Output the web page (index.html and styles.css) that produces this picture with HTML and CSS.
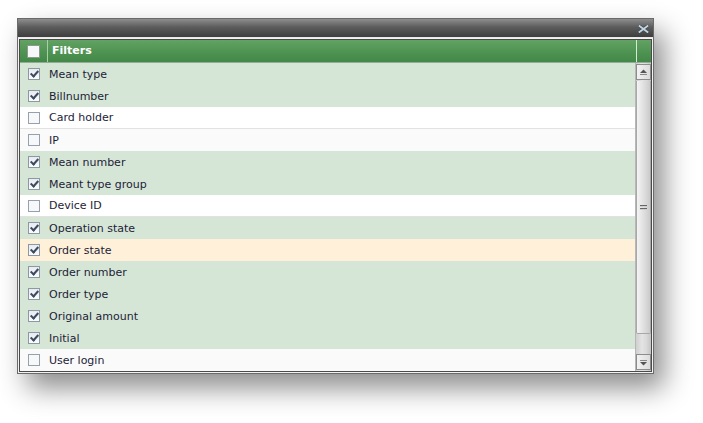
FILE: index.html
```html
<!DOCTYPE html>
<html>
<head>
<meta charset="utf-8">
<link rel="stylesheet" href="styles.css">
</head>
<body>
<div class="window">
  <div class="titlebar">
    <svg class="close" width="11" height="8" viewBox="0 0 11 8">
      <path d="M1.5 1 L9.5 7 M9.5 1 L1.5 7" stroke="#3a4a55" stroke-width="3.2" stroke-linecap="square"/>
      <path d="M1.5 1 L9.5 7 M9.5 1 L1.5 7" stroke="#c4d3dd" stroke-width="1.8" stroke-linecap="square"/>
    </svg>
  </div>
  <div class="panel">
    <div class="header">
      <div class="hcell-check"><span class="box hbox"></span></div>
      <div class="hcell-title">Filters</div>
      <div class="hcell-end"></div>
    </div>
    <div class="body">
      <div class="rows">
        <div class="row on"><span class="cb"><span class="box checked"></span></span><span class="label">Mean type</span></div>
        <div class="row on"><span class="cb"><span class="box checked"></span></span><span class="label">Billnumber</span></div>
        <div class="row off white"><span class="cb"><span class="box"></span></span><span class="label">Card holder</span></div>
        <div class="row off alt"><span class="cb"><span class="box"></span></span><span class="label">IP</span></div>
        <div class="row on"><span class="cb"><span class="box checked"></span></span><span class="label">Mean number</span></div>
        <div class="row on"><span class="cb"><span class="box checked"></span></span><span class="label">Meant type group</span></div>
        <div class="row off white"><span class="cb"><span class="box"></span></span><span class="label">Device ID</span></div>
        <div class="row on"><span class="cb"><span class="box checked"></span></span><span class="label">Operation state</span></div>
        <div class="row hover"><span class="cb"><span class="box checked"></span></span><span class="label">Order state</span></div>
        <div class="row on"><span class="cb"><span class="box checked"></span></span><span class="label">Order number</span></div>
        <div class="row on"><span class="cb"><span class="box checked"></span></span><span class="label">Order type</span></div>
        <div class="row on"><span class="cb"><span class="box checked"></span></span><span class="label">Original amount</span></div>
        <div class="row on"><span class="cb"><span class="box checked"></span></span><span class="label">Initial</span></div>
        <div class="row off alt"><span class="cb"><span class="box"></span></span><span class="label">User login</span></div>
      </div>
      <div class="scrollbar">
        <div class="sbtn up">
          <svg width="9" height="7" viewBox="0 0 9 7"><path d="M4.5 0.5 L8 4 L1 4 Z" fill="#555"/><rect x="1" y="5" width="7" height="1" fill="#888"/></svg>
        </div>
        <div class="track">
          <div class="thumb"><span class="grip"></span></div>
          <div class="rest"></div>
        </div>
        <div class="sbtn down">
          <svg width="9" height="7" viewBox="0 0 9 7"><rect x="1" y="1" width="7" height="1" fill="#888"/><path d="M1 3 L8 3 L4.5 6.5 Z" fill="#555"/></svg>
        </div>
      </div>
    </div>
  </div>
</div>
</body>
</html>
```
FILE: styles.css
```css
html, body {
  margin: 0;
  padding: 0;
  background: #ffffff;
}
html {
  height: 100%;
}
body {
  box-sizing: border-box;
  min-height: 100%;
  padding: 18px 0 0 17px;
  font-family: "DejaVu Sans", Verdana, sans-serif;
}
.window {
  width: 635px;
  border: 1px solid #6a6a6a;
  background: #f2f2f2;
  box-shadow: 10px 14px 26px rgba(0, 0, 0, 0.45);
}
.titlebar {
  height: 18px;
  background: linear-gradient(#8e8e8e, #5c5c5c 45%, #3e3e3e);
  border-bottom: 1px solid #e8e8e8;
  display: flex;
  justify-content: flex-end;
  align-items: center;
  padding-right: 4px;
}
.close {
  display: block;
  margin-top: 1px;
}
.panel {
  margin: 1px;
  border: 1px solid #4a4a4a;
  background: #fff;
}
.header {
  display: flex;
  height: 22px;
  background: linear-gradient(#62a262, #4f9352 55%, #438848);
  border-bottom: 1px solid #8fae95;
  color: #fff;
  font-weight: bold;
  font-size: 11px;
}
.hcell-check {
  width: 27px;
  border-right: 1px solid #a9cfa9;
  display: flex;
  align-items: center;
  justify-content: center;
}
.hcell-title {
  flex: 1;
  padding-left: 4px;
  line-height: 22px;
}
.hcell-end {
  width: 14px;
  border-left: 1px solid #d8e8d8;
}
.box {
  display: block;
  width: 10px;
  height: 10px;
  border: 1px solid #97a1ad;
  background: #f7f8fa;
  position: relative;
}
.hbox {
  width: 11px;
  height: 11px;
  background: #f5f7fa;
  border-color: #8c9a8e;
}
.box.checked {
  background: linear-gradient(#e8ecf1, #fafbfc);
  border-color: #8e98a4;
}
.box.checked::after {
  content: "";
  position: absolute;
  left: 3px;
  top: 0px;
  width: 3px;
  height: 6px;
  border-right: 2px solid #3d4b5e;
  border-bottom: 2px solid #3d4b5e;
  transform: rotate(42deg);
}
.body {
  display: flex;
}
.rows {
  flex: 1;
}
.row {
  display: flex;
  align-items: center;
  height: 22px;
  font-size: 11px;
  color: #1d1d38;
}
.row.on { background: #d6e6d6; }
.row.white { background: #ffffff; border-bottom: 1px solid #e2e2e2; height: 21px; }
.row.alt { background: #fafafa; }
.row.hover { background: #fff1d9; }
.cb {
  width: 28px;
  display: flex;
  justify-content: center;
}
.label {
  padding-left: 1px;
}
.scrollbar {
  width: 15px;
  border-left: 1px solid #b7b7b7;
  background: linear-gradient(90deg, #cfcfcf, #e4e4e4 40%, #d9d9d9 70%, #c4c4c4);
  display: flex;
  flex-direction: column;
}
.sbtn {
  height: 14px;
  margin: 1px 0;
  border: 1px solid #8c8c8c;
  background: linear-gradient(90deg, #f2f2f2, #dcdcdc);
  display: flex;
  align-items: center;
  justify-content: center;
}
.track {
  flex: 1;
  display: flex;
  flex-direction: column;
}
.thumb {
  height: 252px;
  border: 1px solid #a8a8a8;
  border-top: none;
  border-radius: 0 0 2px 2px;
  background: linear-gradient(90deg, #f4f4f4, #e0e0e0 50%, #cbcbcb);
  display: flex;
  align-items: center;
  justify-content: center;
}
.grip {
  display: block;
  width: 7px;
  height: 6px;
  background: repeating-linear-gradient(#666 0 1px, #cfcfcf 1px 2px, transparent 2px 3px);
  margin-top: 2px;
}
.rest {
  flex: 1;
}
```
